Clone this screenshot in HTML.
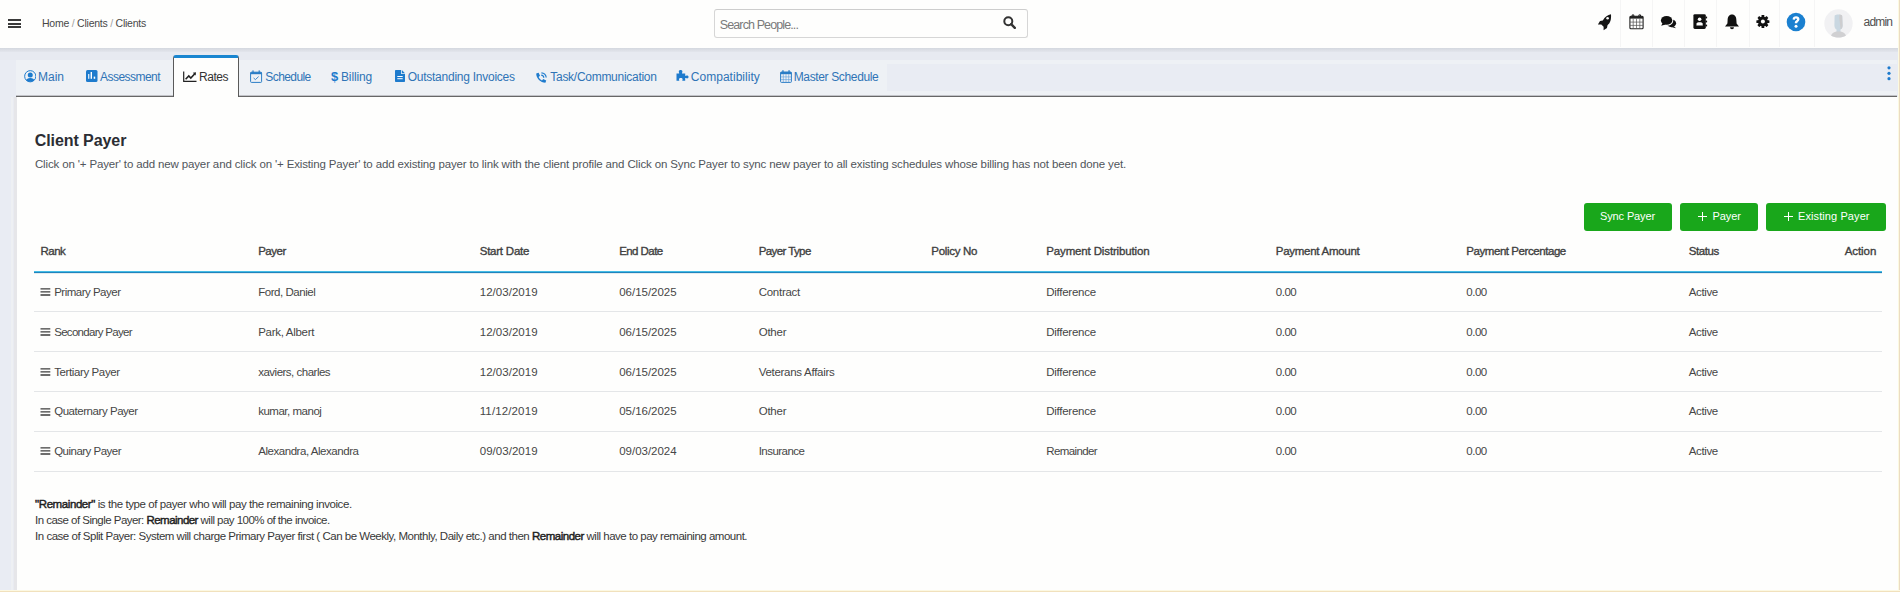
<!DOCTYPE html>
<html>
<head>
<meta charset="utf-8">
<style>
html,body{margin:0;padding:0;}
body{width:1900px;height:592px;overflow:hidden;position:relative;background:#e9ecf3;font-family:"Liberation Sans",sans-serif;}
.a{position:absolute;}
.t{position:absolute;white-space:pre;line-height:1;font-family:"Liberation Sans",sans-serif;}
#hdr{left:0;top:0;width:1900px;height:48px;background:#fefefd;z-index:2;}
#hsh{left:0;top:48px;width:1900px;height:4px;background:linear-gradient(#d4d8df,#e3e6ed);}
#band{left:0;top:52px;width:1900px;height:8px;background:#e7eaf1;}
#tabbg{left:16px;top:60px;width:1881px;height:36px;background:#eef1f5;}
#tabrest{left:887px;top:64px;width:1010px;height:27px;background:#e9ecf3;}
#tabline{left:16px;top:96px;width:1881px;height:1px;background:#676767;}
#tabline2{left:16px;top:95px;width:1881px;height:1px;background:#c2c3c8;}
#panel{left:17px;top:97px;width:1881px;height:493px;background:#fefefd;}
#gutsh{left:11px;top:97px;width:6px;height:493px;background:linear-gradient(to right,#eef0f3 0,#eef0f3 2px,#e9ebf1 2px,#e9ebf1 3px,#e6e6e9 3px);}
#activetab{left:173px;top:55px;width:64px;height:39px;background:#fefefd;border:1px solid #5a5a5a;border-bottom:none;border-top:3px solid #1a86d0;border-radius:3px 3px 0 0;}
#botline{left:0;top:590px;width:1900px;height:2px;background:linear-gradient(#fcf8e2 50%,#f1e1bd 50%);z-index:6;}
#rightline{left:1898px;top:0;width:2px;height:592px;background:linear-gradient(to right,#fcf9e0 50%,#ebdcc2 50%);z-index:6;}
#rightgray{left:1897px;top:48px;width:1px;height:542px;background:#e3e3e3;}
.sep{position:absolute;left:34px;width:1848px;height:1px;background:#e4e6e8;}
.btn{position:absolute;top:203px;height:28px;background:#19a71b;border-radius:3px;}
.vsep{position:absolute;top:0;width:1px;height:47px;background:#f5f5f5;}
</style>
</head>
<body>
<div id="hdr" class="a">
  <!-- hamburger -->
  <div class="a" style="left:8px;top:19px;width:13px;height:2px;background:#3a3a3a"></div>
  <div class="a" style="left:8px;top:22.5px;width:13px;height:2px;background:#3a3a3a"></div>
  <div class="a" style="left:8px;top:26px;width:13px;height:2px;background:#3a3a3a"></div>
  <!-- search -->
  <div class="a" style="left:714px;top:9px;width:312px;height:27px;border:1px solid #d6d6d6;border-top-color:#cdcdcd;border-radius:3px;background:#fefefd"></div>
  <svg class="a" style="left:1003px;top:16px" width="13" height="13" viewBox="0 0 13 13"><circle cx="5.3" cy="5.3" r="4" fill="none" stroke="#333" stroke-width="2"/><line x1="8.2" y1="8.2" x2="11.8" y2="11.8" stroke="#333" stroke-width="2.4" stroke-linecap="round"/></svg>
  <!-- separators -->
  <div class="vsep" style="left:1620px"></div>
  <div class="vsep" style="left:1652px"></div>
  <div class="vsep" style="left:1684px"></div>
  <div class="vsep" style="left:1716px"></div>
  <div class="vsep" style="left:1749px"></div>
  <div class="vsep" style="left:1779px"></div>
  <div class="vsep" style="left:1814px"></div>
  <!-- rocket -->
  <svg class="a" style="left:1597px;top:13px" width="16" height="18" viewBox="0 0 16 18"><path d="M14 1.3 C10.8 1.8 7.8 4.2 5.8 7.4 L3 7.9 L0.9 11.4 L4.3 11.4 L6.6 13.7 L6.6 17.2 L10 15 L10.5 12.2 C13.2 10.2 14.4 7 14 1.3 Z" fill="#151515"/><circle cx="10.6" cy="5.2" r="1.3" fill="#fefefd"/></svg>
  <!-- calendar -->
  <svg class="a" style="left:1629px;top:14px" width="15" height="16" viewBox="0 0 15 16"><rect x="0.9" y="2.2" width="13.2" height="12.6" rx="1" fill="none" stroke="#222" stroke-width="1.1"/><rect x="0.9" y="2.2" width="13.2" height="2.4" fill="#222"/><path d="M3.2 3 V0.9 H4.8 V3 M9.9 3 V0.9 H11.5 V3" fill="none" stroke="#222" stroke-width="1"/><path d="M1 8.1H14M1 11.4H14M4.2 4.6V14.8M7.5 4.6V14.8M10.8 4.6V14.8" stroke="#555" stroke-width="0.7"/></svg>
  <!-- comments -->
  <svg class="a" style="left:1660px;top:15px" width="17" height="14" viewBox="0 0 17 14"><ellipse cx="11.4" cy="8.3" rx="4.7" ry="3.9" fill="#111"/><path d="M13.6 11 L16 13.3 L11.2 12Z" fill="#111"/><ellipse cx="6.6" cy="5.4" rx="6.7" ry="5.3" fill="#fefefd"/><ellipse cx="6.6" cy="5.4" rx="5.7" ry="4.3" fill="#111"/><path d="M2.6 8 L1.2 10.8 L5.6 9.4Z" fill="#111"/></svg>
  <!-- address book -->
  <svg class="a" style="left:1692px;top:14px" width="16" height="16" viewBox="0 0 16 16"><rect x="1.4" y="0.2" width="12.4" height="14.7" rx="1.4" fill="#111"/><rect x="13.5" y="2.6" width="1.6" height="1.8" fill="#111"/><rect x="13.5" y="6.6" width="1.6" height="1.8" fill="#111"/><rect x="13.5" y="10.6" width="1.6" height="1.8" fill="#111"/><circle cx="7.6" cy="5.3" r="1.8" fill="#fefefd"/><path d="M4.4 11.6 L4.6 9.4 C4.8 7.8 10.4 7.8 10.6 9.4 L10.8 11.6 Z" fill="#fefefd"/></svg>
  <!-- bell -->
  <svg class="a" style="left:1724px;top:13.5px" width="16" height="16" viewBox="0 0 16 16"><path d="M8 0.6 C5 0.6 3.6 3.2 3.6 6.4 L3.4 9.6 L1 12.6 L15 12.6 L12.6 9.6 L12.4 6.4 C12.4 3.2 11 0.6 8 0.6Z" fill="#111"/><path d="M6 13.2 A2 2 0 0 0 10 13.2Z" fill="#111"/></svg>
  <!-- gear -->
  <svg class="a" style="left:1756px;top:15px" width="14" height="14" viewBox="0 0 14 14"><g transform="translate(6.9 6.6)" fill="#111"><circle r="4.9"/><rect x="-1.4" y="-6.5" width="2.8" height="13" rx="0.5"/><rect x="-1.4" y="-6.5" width="2.8" height="13" rx="0.5" transform="rotate(45)"/><rect x="-1.4" y="-6.5" width="2.8" height="13" rx="0.5" transform="rotate(90)"/><rect x="-1.4" y="-6.5" width="2.8" height="13" rx="0.5" transform="rotate(135)"/><circle r="2" fill="#fefefd"/></g></svg>
  <!-- help -->
  <svg class="a" style="left:1786px;top:12px" width="20" height="20" viewBox="0 0 20 20"><circle cx="10" cy="10" r="9.3" fill="#1b80d0"/><path d="M6.6 7.6 C6.6 5.4 8.2 4.3 10.1 4.3 C12 4.3 13.5 5.5 13.5 7.2 C13.5 9.3 11.2 9.5 11.2 11.2 L8.8 11.2 C8.8 8.6 11 8.5 11 7.3 C11 6.7 10.6 6.4 10 6.4 C9.3 6.4 8.9 6.9 8.9 7.7Z" fill="#fff"/><circle cx="10" cy="14.2" r="1.5" fill="#fff"/></svg>
  <!-- avatar -->
  <svg class="a" style="left:1823.5px;top:8.5px" width="29" height="29" viewBox="0 0 29 29"><circle cx="14.5" cy="14.5" r="14.2" fill="#f1f1f3"/><path d="M10.6 7 C10.6 5 18.2 5 18.2 7 L18.6 16.4 C18.6 19.2 17 20.2 16.4 20.6 L16.6 23 L12.4 23 L12.6 20.6 C12 20.2 10.4 19.2 10.4 16.4Z" fill="#c9d7e1"/><path d="M15.6 5.6 C17.2 5.7 18.2 6.2 18.2 7 L18.6 16.4 C18.6 19 17.4 20 16.6 20.5 L16 15 L15.2 9Z" fill="#cdcdcf"/><path d="M7 26.5 C8 23.5 11 22.6 13 22.4 L16 22.4 C18 22.6 21 23.5 22 26.5 C20 28 17 28.6 14.5 28.6 C12 28.6 9 28 7 26.5Z" fill="#d0d0d2"/></svg>
</div>
<div id="hsh" class="a"></div>
<div id="band" class="a"></div>
<div id="tabbg" class="a"></div>
<div id="tabrest" class="a"></div>
<div id="panel" class="a"></div>
<div id="gutsh" class="a"></div>
<div id="tabline2" class="a"></div>
<div id="tabline" class="a"></div>
<div id="activetab" class="a"></div>
<div id="rightline" class="a"></div>
<div id="botline" class="a"></div>

<!-- tab icons -->
<svg class="a" style="left:23.5px;top:70px" width="12.5" height="12.5" viewBox="0 0 12.5 12.5"><defs><clipPath id="cc"><circle cx="6.25" cy="6.25" r="5.6"/></clipPath></defs><circle cx="6.25" cy="6.25" r="5.6" fill="none" stroke="#1e7bcd" stroke-width="1"/><g clip-path="url(#cc)"><circle cx="6.25" cy="4.9" r="2.5" fill="#1e7bcd"/><ellipse cx="6.25" cy="11.6" rx="4.6" ry="3.6" fill="#1e7bcd"/></g></svg>
<svg class="a" style="left:86px;top:70px" width="11.5" height="12" viewBox="0 0 11.5 12"><rect x="0" y="0" width="11.5" height="12" rx="1.5" fill="#1e7bcd"/><rect x="2.2" y="4" width="1.1" height="4.8" fill="#fff"/><rect x="4.6" y="2" width="1.4" height="6.8" fill="#fff"/><rect x="7.7" y="6.6" width="1.5" height="2.2" fill="#fff"/></svg>
<svg class="a" style="left:182.5px;top:70.5px" width="14" height="11" viewBox="0 0 14 11"><path d="M0.7 0.5 V10.3 H13.5" fill="none" stroke="#222" stroke-width="1.2"/><path d="M2.6 8.3 L5.8 5 L7.8 7 L11.8 2.8" fill="none" stroke="#222" stroke-width="1.6"/><path d="M9.8 1.8 L13 1.3 L12.6 4.5Z" fill="#222"/></svg>
<svg class="a" style="left:250px;top:70px" width="13" height="13" viewBox="0 0 13 13"><rect x="0.6" y="2.2" width="11" height="10.2" rx="0.8" fill="none" stroke="#2a7dc6" stroke-width="1"/><rect x="0.6" y="2.2" width="11" height="2" fill="#2a7dc6"/><rect x="2.4" y="0.4" width="1.2" height="2.6" fill="#2a7dc6"/><rect x="8.6" y="0.4" width="1.2" height="2.6" fill="#2a7dc6"/><path d="M3.6 8 L5.4 9.6 L8.6 6.6" fill="none" stroke="#2a7dc6" stroke-width="0.9"/></svg>
<div class="t" style="left:331px;top:70px;font-size:13px;font-weight:700;color:#1e7bcd;letter-spacing:-0.5px">$</div>
<svg class="a" style="left:394.5px;top:70px" width="10" height="12" viewBox="0 0 10 12"><path d="M0 0.8 Q0 0 0.8 0 L6 0 L6 3.6 Q6 4 6.4 4 L10 4 L10 11.2 Q10 12 9.2 12 L0.8 12 Q0 12 0 11.2Z" fill="#1e7bcd"/><path d="M6.8 0 L10 3.2 L6.8 3.2Z" fill="#1e7bcd"/><rect x="2.3" y="6" width="5.4" height="1" fill="#fff"/><rect x="2.3" y="8.2" width="5.4" height="1" fill="#fff"/></svg>
<svg class="a" style="left:534.5px;top:71.5px" width="12" height="12" viewBox="0 0 12 12"><path d="M1.2 1.6 L3.6 0.8 L5 3.8 L3.6 5 C4.3 6.6 5.4 7.7 7 8.4 L8.2 7 L11.2 8.4 L10.4 10.8 C5.6 10.8 1.2 6.4 1.2 1.6Z" fill="#1e7bcd"/><path d="M6.2 3.2 A2.8 2.8 0 0 1 8.8 5.8 M6.4 0.8 A5 5 0 0 1 11.2 5.6" fill="none" stroke="#1e7bcd" stroke-width="1.2"/></svg>
<svg class="a" style="left:676px;top:70px" width="13" height="11" viewBox="0 0 13 11"><path d="M0.5 3.5 L3.2 3.5 C3.2 2.6 2.8 2.4 2.8 1.6 C2.8 0.6 3.6 0.1 4.6 0.1 C5.6 0.1 6.4 0.6 6.4 1.6 C6.4 2.4 6 2.6 6 3.5 L9.2 3.5 L9.2 6 C10 6 10.3 5.6 11 5.6 C12 5.6 12.5 6.2 12.5 7 C12.5 7.8 12 8.4 11 8.4 C10.3 8.4 10 8 9.2 8 L9.2 10.8 L6.3 10.8 C6.3 10 6.6 9.8 6.6 9.2 C6.6 8.4 5.8 8 4.8 8 C3.8 8 3 8.4 3 9.2 C3 9.8 3.3 10 3.3 10.8 L0.5 10.8Z" fill="#1e7bcd"/></svg>
<svg class="a" style="left:779.5px;top:70px" width="12" height="13" viewBox="0 0 12 13"><rect x="0.6" y="2" width="10.8" height="10.4" rx="0.8" fill="none" stroke="#2a7dc6" stroke-width="1"/><rect x="0.6" y="2" width="10.8" height="2.2" fill="#2a7dc6"/><rect x="2.3" y="0.2" width="1.3" height="2.4" fill="#2a7dc6"/><rect x="8.4" y="0.2" width="1.3" height="2.4" fill="#2a7dc6"/><path d="M0.8 6.9H11.2M0.8 9.6H11.2M3.3 4.2V12.4M6 4.2V12.4M8.7 4.2V12.4" stroke="#5b9bd6" stroke-width="0.6"/></svg>
<!-- kebab -->
<svg class="a" style="left:1886px;top:64px" width="6" height="18" viewBox="0 0 6 18"><circle cx="3" cy="3.8" r="1.6" fill="#1e7bcd"/><circle cx="3" cy="9.3" r="1.6" fill="#1e7bcd"/><circle cx="3" cy="14.7" r="1.6" fill="#1e7bcd"/></svg>

<!-- buttons -->
<div class="btn" style="left:1584px;width:88px"></div>
<div class="btn" style="left:1680px;width:78px"></div>
<div class="btn" style="left:1766px;width:120px"></div>
<div class="a" style="left:1698px;top:215.8px;width:9px;height:1.4px;background:#fff"></div>
<div class="a" style="left:1701.8px;top:212px;width:1.4px;height:9px;background:#fff"></div>
<div class="a" style="left:1784px;top:215.8px;width:9px;height:1.4px;background:#fff"></div>
<div class="a" style="left:1787.8px;top:212px;width:1.4px;height:9px;background:#fff"></div>

<!-- table lines -->
<div class="a" style="left:34px;top:271px;width:1848px;height:1px;background:#45bde6"></div>
<div class="a" style="left:34px;top:272px;width:1848px;height:1px;background:#1f84bd"></div>
<div class="a" style="left:34px;top:273px;width:1848px;height:1px;background:#e4ecee"></div>
<div class="sep" style="top:311px"></div>
<div class="sep" style="top:351px"></div>
<div class="sep" style="top:391px"></div>
<div class="sep" style="top:431px"></div>
<div class="sep" style="top:471px"></div>
<!-- row drag icons -->
<svg class="a" style="left:39.5px;top:287px" width="11" height="10" viewBox="0 0 11 10"><path d="M0.5 1.8H10.3M0.5 4.9H10.3M0.5 8.0H10.3" stroke="#3e3e3e" stroke-width="1.3"/></svg>
<svg class="a" style="left:39.5px;top:327px" width="11" height="10" viewBox="0 0 11 10"><path d="M0.5 1.8H10.3M0.5 4.9H10.3M0.5 8.0H10.3" stroke="#3e3e3e" stroke-width="1.3"/></svg>
<svg class="a" style="left:39.5px;top:367px" width="11" height="10" viewBox="0 0 11 10"><path d="M0.5 1.8H10.3M0.5 4.9H10.3M0.5 8.0H10.3" stroke="#3e3e3e" stroke-width="1.3"/></svg>
<svg class="a" style="left:39.5px;top:407px" width="11" height="10" viewBox="0 0 11 10"><path d="M0.5 1.8H10.3M0.5 4.9H10.3M0.5 8.0H10.3" stroke="#3e3e3e" stroke-width="1.3"/></svg>
<svg class="a" style="left:39.5px;top:446px" width="11" height="10" viewBox="0 0 11 10"><path d="M0.5 1.8H10.3M0.5 4.9H10.3M0.5 8.0H10.3" stroke="#3e3e3e" stroke-width="1.3"/></svg>

<div style="position:absolute;left:0;top:0;z-index:3">
<div class='t' style='left:42.00px;top:18.00px;font-size:10.5px;font-weight:400;color:#484848;letter-spacing:-0.239px;'>Home <span style="color:#a0a0a0">/</span> Clients <span style="color:#a0a0a0">/</span> Clients</div>
<div class='t' style='left:719.80px;top:19.00px;font-size:12.5px;font-weight:400;color:#7a7a7a;letter-spacing:-0.889px;'>Search People...</div>
<div class='t' style='left:1863.50px;top:16.00px;font-size:12px;font-weight:400;color:#505050;letter-spacing:-0.798px;'>admin</div>
<div class='t' style='left:38.00px;top:71.00px;font-size:12px;font-weight:400;color:#2f74b6;letter-spacing:-0.004px;'>Main</div>
<div class='t' style='left:100.00px;top:71.00px;font-size:12px;font-weight:400;color:#2f74b6;letter-spacing:-0.536px;'>Assessment</div>
<div class='t' style='left:265.30px;top:71.00px;font-size:12px;font-weight:400;color:#2f74b6;letter-spacing:-0.581px;'>Schedule</div>
<div class='t' style='left:341.00px;top:71.00px;font-size:12px;font-weight:400;color:#2f74b6;letter-spacing:-0.145px;'>Billing</div>
<div class='t' style='left:407.70px;top:71.00px;font-size:12px;font-weight:400;color:#2f74b6;letter-spacing:-0.249px;'>Outstanding Invoices</div>
<div class='t' style='left:550.30px;top:71.00px;font-size:12px;font-weight:400;color:#2f74b6;letter-spacing:-0.282px;'>Task/Communication</div>
<div class='t' style='left:690.80px;top:71.00px;font-size:12px;font-weight:400;color:#2f74b6;letter-spacing:0.023px;'>Compatibility</div>
<div class='t' style='left:793.70px;top:71.00px;font-size:12px;font-weight:400;color:#2f74b6;letter-spacing:-0.356px;'>Master Schedule</div>
<div class='t' style='left:199.00px;top:71.00px;font-size:12px;font-weight:400;color:#333;letter-spacing:-0.472px;'>Rates</div>
<div class='t' style='left:34.70px;top:133.00px;font-size:16px;font-weight:700;color:#2b2d33;letter-spacing:-0.074px;'>Client Payer</div>
<div class='t' style='left:34.90px;top:159.00px;font-size:11.5px;font-weight:400;color:#50555b;letter-spacing:-0.141px;'>Click on '+ Payer' to add new payer and click on '+ Existing Payer' to add existing payer to link with the client profile and Click on Sync Payer to sync new payer to all existing schedules whose billing has not been done yet.</div>
<div class='t' style='left:1600.00px;top:211.00px;font-size:11px;font-weight:400;color:#ffffff;letter-spacing:-0.125px;'>Sync Payer</div>
<div class='t' style='left:1712.40px;top:211.00px;font-size:11px;font-weight:400;color:#ffffff;letter-spacing:-0.070px;'>Payer</div>
<div class='t' style='left:1798.00px;top:211.00px;font-size:11px;font-weight:400;color:#ffffff;letter-spacing:0.092px;'>Existing Payer</div>
<div class='t' style='left:40.50px;top:246.00px;font-size:11.5px;font-weight:400;color:#404040;letter-spacing:-0.515px;-webkit-text-stroke:0.35px #404040;'>Rank</div>
<div class='t' style='left:258.20px;top:246.00px;font-size:11.5px;font-weight:400;color:#404040;letter-spacing:-0.489px;-webkit-text-stroke:0.35px #404040;'>Payer</div>
<div class='t' style='left:479.70px;top:246.00px;font-size:11.5px;font-weight:400;color:#404040;letter-spacing:-0.228px;-webkit-text-stroke:0.35px #404040;'>Start Date</div>
<div class='t' style='left:619.20px;top:246.00px;font-size:11.5px;font-weight:400;color:#404040;letter-spacing:-0.569px;-webkit-text-stroke:0.35px #404040;'>End Date</div>
<div class='t' style='left:758.70px;top:246.00px;font-size:11.5px;font-weight:400;color:#404040;letter-spacing:-0.597px;-webkit-text-stroke:0.35px #404040;'>Payer Type</div>
<div class='t' style='left:931.30px;top:246.00px;font-size:11.5px;font-weight:400;color:#404040;letter-spacing:-0.309px;-webkit-text-stroke:0.35px #404040;'>Policy No</div>
<div class='t' style='left:1046.30px;top:246.00px;font-size:11.5px;font-weight:400;color:#404040;letter-spacing:-0.145px;-webkit-text-stroke:0.35px #404040;'>Payment Distribution</div>
<div class='t' style='left:1275.80px;top:246.00px;font-size:11.5px;font-weight:400;color:#404040;letter-spacing:-0.277px;-webkit-text-stroke:0.35px #404040;'>Payment Amount</div>
<div class='t' style='left:1466.30px;top:246.00px;font-size:11.5px;font-weight:400;color:#404040;letter-spacing:-0.439px;-webkit-text-stroke:0.35px #404040;'>Payment Percentage</div>
<div class='t' style='left:1688.70px;top:246.00px;font-size:11.5px;font-weight:400;color:#404040;letter-spacing:-0.385px;-webkit-text-stroke:0.35px #404040;'>Status</div>
<div class='t' style='left:1844.70px;top:246.00px;font-size:11.5px;font-weight:400;color:#404040;letter-spacing:-0.061px;-webkit-text-stroke:0.35px #404040;'>Action</div>
<div class='t' style='left:54.20px;top:287.00px;font-size:11.5px;font-weight:400;color:#464646;letter-spacing:-0.505px;'>Primary Payer</div>
<div class='t' style='left:258.20px;top:287.00px;font-size:11.5px;font-weight:400;color:#464646;letter-spacing:-0.462px;'>Ford, Daniel</div>
<div class='t' style='left:479.70px;top:287.00px;font-size:11.5px;font-weight:400;color:#464646;letter-spacing:0.044px;'>12/03/2019</div>
<div class='t' style='left:619.20px;top:287.00px;font-size:11.5px;font-weight:400;color:#464646;letter-spacing:-0.016px;'>06/15/2025</div>
<div class='t' style='left:758.70px;top:287.00px;font-size:11.5px;font-weight:400;color:#464646;letter-spacing:-0.271px;'>Contract</div>
<div class='t' style='left:1046.30px;top:287.00px;font-size:11.5px;font-weight:400;color:#464646;letter-spacing:-0.272px;'>Difference</div>
<div class='t' style='left:1275.80px;top:287.00px;font-size:11.5px;font-weight:400;color:#464646;letter-spacing:-0.473px;'>0.00</div>
<div class='t' style='left:1466.30px;top:287.00px;font-size:11.5px;font-weight:400;color:#464646;letter-spacing:-0.473px;'>0.00</div>
<div class='t' style='left:1688.70px;top:287.00px;font-size:11.5px;font-weight:400;color:#464646;letter-spacing:-0.355px;'>Active</div>
<div class='t' style='left:54.20px;top:327.00px;font-size:11.5px;font-weight:400;color:#464646;letter-spacing:-0.708px;'>Secondary Payer</div>
<div class='t' style='left:258.20px;top:327.00px;font-size:11.5px;font-weight:400;color:#464646;letter-spacing:-0.288px;'>Park, Albert</div>
<div class='t' style='left:479.70px;top:327.00px;font-size:11.5px;font-weight:400;color:#464646;letter-spacing:0.044px;'>12/03/2019</div>
<div class='t' style='left:619.20px;top:327.00px;font-size:11.5px;font-weight:400;color:#464646;letter-spacing:-0.016px;'>06/15/2025</div>
<div class='t' style='left:758.70px;top:327.00px;font-size:11.5px;font-weight:400;color:#464646;letter-spacing:-0.233px;'>Other</div>
<div class='t' style='left:1046.30px;top:327.00px;font-size:11.5px;font-weight:400;color:#464646;letter-spacing:-0.272px;'>Difference</div>
<div class='t' style='left:1275.80px;top:327.00px;font-size:11.5px;font-weight:400;color:#464646;letter-spacing:-0.473px;'>0.00</div>
<div class='t' style='left:1466.30px;top:327.00px;font-size:11.5px;font-weight:400;color:#464646;letter-spacing:-0.473px;'>0.00</div>
<div class='t' style='left:1688.70px;top:327.00px;font-size:11.5px;font-weight:400;color:#464646;letter-spacing:-0.355px;'>Active</div>
<div class='t' style='left:54.20px;top:367.00px;font-size:11.5px;font-weight:400;color:#464646;letter-spacing:-0.388px;'>Tertiary Payer</div>
<div class='t' style='left:258.20px;top:367.00px;font-size:11.5px;font-weight:400;color:#464646;letter-spacing:-0.499px;'>xaviers, charles</div>
<div class='t' style='left:479.70px;top:367.00px;font-size:11.5px;font-weight:400;color:#464646;letter-spacing:0.044px;'>12/03/2019</div>
<div class='t' style='left:619.20px;top:367.00px;font-size:11.5px;font-weight:400;color:#464646;letter-spacing:-0.016px;'>06/15/2025</div>
<div class='t' style='left:758.70px;top:367.00px;font-size:11.5px;font-weight:400;color:#464646;letter-spacing:-0.284px;'>Veterans Affairs</div>
<div class='t' style='left:1046.30px;top:367.00px;font-size:11.5px;font-weight:400;color:#464646;letter-spacing:-0.272px;'>Difference</div>
<div class='t' style='left:1275.80px;top:367.00px;font-size:11.5px;font-weight:400;color:#464646;letter-spacing:-0.473px;'>0.00</div>
<div class='t' style='left:1466.30px;top:367.00px;font-size:11.5px;font-weight:400;color:#464646;letter-spacing:-0.473px;'>0.00</div>
<div class='t' style='left:1688.70px;top:367.00px;font-size:11.5px;font-weight:400;color:#464646;letter-spacing:-0.355px;'>Active</div>
<div class='t' style='left:54.20px;top:406.00px;font-size:11.5px;font-weight:400;color:#464646;letter-spacing:-0.454px;'>Quaternary Payer</div>
<div class='t' style='left:258.20px;top:406.00px;font-size:11.5px;font-weight:400;color:#464646;letter-spacing:-0.486px;'>kumar, manoj</div>
<div class='t' style='left:479.70px;top:406.00px;font-size:11.5px;font-weight:400;color:#464646;letter-spacing:0.130px;'>11/12/2019</div>
<div class='t' style='left:619.20px;top:406.00px;font-size:11.5px;font-weight:400;color:#464646;letter-spacing:-0.016px;'>05/16/2025</div>
<div class='t' style='left:758.70px;top:406.00px;font-size:11.5px;font-weight:400;color:#464646;letter-spacing:-0.233px;'>Other</div>
<div class='t' style='left:1046.30px;top:406.00px;font-size:11.5px;font-weight:400;color:#464646;letter-spacing:-0.272px;'>Difference</div>
<div class='t' style='left:1275.80px;top:406.00px;font-size:11.5px;font-weight:400;color:#464646;letter-spacing:-0.473px;'>0.00</div>
<div class='t' style='left:1466.30px;top:406.00px;font-size:11.5px;font-weight:400;color:#464646;letter-spacing:-0.473px;'>0.00</div>
<div class='t' style='left:1688.70px;top:406.00px;font-size:11.5px;font-weight:400;color:#464646;letter-spacing:-0.355px;'>Active</div>
<div class='t' style='left:54.20px;top:446.00px;font-size:11.5px;font-weight:400;color:#464646;letter-spacing:-0.517px;'>Quinary Payer</div>
<div class='t' style='left:258.20px;top:446.00px;font-size:11.5px;font-weight:400;color:#464646;letter-spacing:-0.451px;'>Alexandra, Alexandra</div>
<div class='t' style='left:479.70px;top:446.00px;font-size:11.5px;font-weight:400;color:#464646;letter-spacing:0.044px;'>09/03/2019</div>
<div class='t' style='left:619.20px;top:446.00px;font-size:11.5px;font-weight:400;color:#464646;letter-spacing:-0.016px;'>09/03/2024</div>
<div class='t' style='left:758.70px;top:446.00px;font-size:11.5px;font-weight:400;color:#464646;letter-spacing:-0.535px;'>Insurance</div>
<div class='t' style='left:1046.30px;top:446.00px;font-size:11.5px;font-weight:400;color:#464646;letter-spacing:-0.628px;'>Remainder</div>
<div class='t' style='left:1275.80px;top:446.00px;font-size:11.5px;font-weight:400;color:#464646;letter-spacing:-0.473px;'>0.00</div>
<div class='t' style='left:1466.30px;top:446.00px;font-size:11.5px;font-weight:400;color:#464646;letter-spacing:-0.473px;'>0.00</div>
<div class='t' style='left:1688.70px;top:446.00px;font-size:11.5px;font-weight:400;color:#464646;letter-spacing:-0.355px;'>Active</div>
<div class='t' style='left:35.10px;top:499.00px;font-size:11.5px;font-weight:400;color:#383838;letter-spacing:-0.418px;'><b style="color:#1e1e1e;font-weight:400;-webkit-text-stroke:0.45px #1e1e1e">"Remainder"</b> is the type of payer who will pay the remaining invoice.</div>
<div class='t' style='left:35.10px;top:515.00px;font-size:11.5px;font-weight:400;color:#383838;letter-spacing:-0.532px;'>In case of Single Payer: <b style="color:#1e1e1e;font-weight:400;-webkit-text-stroke:0.45px #1e1e1e">Remainder</b> will pay 100% of the invoice.</div>
<div class='t' style='left:35.10px;top:531.00px;font-size:11.5px;font-weight:400;color:#383838;letter-spacing:-0.486px;'>In case of Split Payer: System will charge Primary Payer first ( Can be Weekly, Monthly, Daily etc.) and then <b style="color:#1e1e1e;font-weight:400;-webkit-text-stroke:0.45px #1e1e1e">Remainder</b> will have to pay remaining amount.</div>
</div>
</body>
</html>
